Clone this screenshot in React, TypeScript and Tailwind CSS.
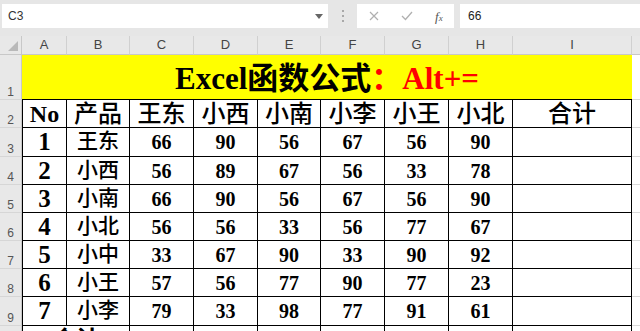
import React from "react";

const serif = "font-['Liberation_Serif','Noto_Sans_CJK_SC',serif]";

const data: [number, string, number[]][] = [
  [1, "王东", [66, 90, 56, 67, 56, 90]],
  [2, "小西", [56, 89, 67, 56, 33, 78]],
  [3, "小南", [66, 90, 56, 67, 56, 90]],
  [4, "小北", [56, 56, 33, 56, 77, 67]],
  [5, "小中", [33, 67, 90, 33, 90, 92]],
  [6, "小王", [57, 56, 77, 90, 77, 23]],
  [7, "小李", [79, 33, 98, 77, 91, 61]],
];

const letters = ["A", "B", "C", "D", "E", "F", "G", "H", "I"];
const heads = ["产品", "王东", "小西", "小南", "小李", "小王", "小北", "合计"];

function RowHead({ n }: { n: number }) {
  return (
    <div className="bg-[#e8e8e8] border-r border-b border-r-[#c8c8c8] border-b-[#d6d6d6] flex items-end justify-center pb-[1px] text-[12px] leading-none text-[#555] font-['Liberation_Sans',sans-serif]">
      {n}
    </div>
  );
}

function Tail() {
  return <div className="bg-white border-b border-[#d9d9d9]" />;
}

export default function App() {
  const cell = "border-r border-b border-black flex items-center justify-center text-black";
  return (
    <div className="w-[640px] h-[331px] overflow-hidden bg-white">
      {/* formula bar */}
      <div className="h-[36px] bg-[#e6e6e6] flex items-start pt-[4px] font-['Liberation_Sans',sans-serif]">
        <div className="ml-[2px] w-[326px] h-[24px] bg-white flex items-center justify-between pl-[6px] pr-[5px] text-[12px] text-[#333]">
          <span>C3</span>
          <svg width="8" height="5" viewBox="0 0 8 5">
            <path d="M0 0 L8 0 L4 5 Z" fill="#666" />
          </svg>
        </div>
        <div className="w-[29px] h-[24px] flex flex-col items-center justify-center gap-[3px]">
          <span className="w-[2px] h-[2px] bg-[#a8a8a8]" />
          <span className="w-[2px] h-[2px] bg-[#a8a8a8]" />
          <span className="w-[2px] h-[2px] bg-[#a8a8a8]" />
        </div>
        <div className="w-[97px] h-[24px] bg-white flex items-center">
          <svg className="ml-[12px]" width="10" height="10" viewBox="0 0 10 10">
            <path d="M1 1 L9 9 M9 1 L1 9" stroke="#b0b0b0" strokeWidth="1.2" />
          </svg>
          <svg className="ml-[22px]" width="12" height="10" viewBox="0 0 12 10">
            <path d="M1 5 L4.5 8.5 L11 1" stroke="#b0b0b0" strokeWidth="1.3" fill="none" />
          </svg>
          <span className="ml-[22px] text-[13px] italic text-[#555] font-['Liberation_Serif',serif] leading-none">
            f<span className="text-[9px]">x</span>
          </span>
        </div>
        <div className="ml-[6px] flex-1 h-[24px] bg-white flex items-center pl-[8px] text-[12px] text-[#222]">
          66
        </div>
      </div>

      {/* sheet */}
      <div className="grid grid-cols-[22px_45px_63px_64px_64px_63px_64px_64px_64px_119px_1fr] grid-rows-[19px_45px_28px_29px_28px_28px_28px_28px_28px_29px_28px]">
        {/* column headers */}
        <div className="bg-[#e8e8e8] border-r border-b border-[#c8c8c8] relative">
          <svg className="absolute right-[3px] bottom-[3px]" width="10" height="10" viewBox="0 0 10 10">
            <path d="M10 0 L10 10 L0 10 Z" fill="#b9b9b9" />
          </svg>
        </div>
        {letters.map((l) => (
          <div
            key={l}
            className="bg-[#e8e8e8] border-r border-b border-r-[#d0d0d0] border-b-[#c8c8c8] flex items-center justify-center text-[13px] text-[#444] font-['Liberation_Sans',sans-serif]"
          >
            {l}
          </div>
        ))}
        <div className="bg-[#e8e8e8] border-b border-[#c8c8c8]" />

        {/* row 1 */}
        <RowHead n={1} />
        <div className={`col-span-9 bg-[#ffff00] border-b border-black flex items-center justify-center pt-[2px] ${serif} font-bold text-[31px] leading-none`}>
          <span className="text-black">Excel函数公式</span>
          <span className="text-[#ff0000]">：Alt+=</span>
        </div>
        <Tail />

        {/* row 2 */}
        <RowHead n={2} />
        <div className={`${cell} border-l ${serif} font-bold text-[24px]`}>No</div>
        {heads.map((h, i) => (
          <div key={i} className={`${cell} ${serif} font-medium text-[24px]`}>
            {h}
          </div>
        ))}
        <Tail />

        {data.map(([no, name, vals], r) => (
          <React.Fragment key={no}>
            <RowHead n={r + 3} />
            <div className={`${cell} border-l ${serif} font-bold text-[25px]`}>{no}</div>
            <div className={`${cell} ${serif} font-medium text-[21px]`}>{name}</div>
            {vals.map((v, i) => (
              <div key={i} className={`${cell} ${serif} font-bold text-[20px]`}>
                {v}
              </div>
            ))}
            <div className={cell} />
            <Tail />
          </React.Fragment>
        ))}

        {/* row 10 */}
        <RowHead n={10} />
        <div className={`${cell} border-l col-span-2 ${serif} text-[24px] font-bold`}>合计</div>
        {[0, 1, 2, 3, 4, 5, 6].map((i) => (
          <div key={i} className={cell} />
        ))}
        <Tail />
      </div>
    </div>
  );
}
